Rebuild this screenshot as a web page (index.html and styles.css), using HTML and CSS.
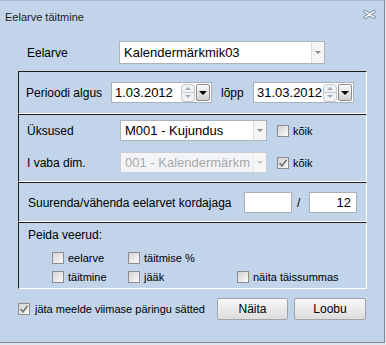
FILE: index.html
```html
<!DOCTYPE html>
<html>
<head>
  <title>Eelarve täitmine</title>
  <link rel="stylesheet" href="styles.css">
</head>
<body>
  <div class="window">
    <div class="titlebar">
      <span class="title">Eelarve täitmine</span>
      <svg class="close-icon" width="13" height="9" viewBox="0 0 13 9">
        <path d="M2 1.5 L11 7.5 M11 1.5 L2 7.5" stroke="#8797aa" stroke-width="3.4" stroke-linecap="round" fill="none"/>
        <path d="M2 1.5 L11 7.5 M11 1.5 L2 7.5" stroke="#ffffff" stroke-width="1.4" stroke-linecap="round" fill="none"/>
      </svg>
    </div>

    <div class="content">
      <div class="row-main">
        <span class="label label-main">Eelarve</span>
        <div class="combo combo-main">
          <span class="combo-value">Kalendermärkmik03</span>
          <span class="combo-trigger"><span class="arrow-small"></span></span>
        </div>
      </div>

      <!-- periood -->
      <div class="group group-period">
        <span class="label label-period">Perioodi algus</span>
        <div class="date-field">
          <span class="date-value">1.03.2012</span>
          <span class="spinner">
            <span class="spin spin-up"><span class="arrow-up"></span></span>
            <span class="spin spin-down"><span class="arrow-down"></span></span>
          </span>
          <span class="drop-btn"><span class="arrow-black"></span></span>
        </div>
        <span class="label label-end">lõpp</span>
        <div class="date-field">
          <span class="date-value">31.03.2012</span>
          <span class="spinner">
            <span class="spin spin-up"><span class="arrow-up"></span></span>
            <span class="spin spin-down"><span class="arrow-down"></span></span>
          </span>
          <span class="drop-btn"><span class="arrow-black"></span></span>
        </div>
      </div>

      <!-- üksused -->
      <div class="group group-units">
        <div class="units-row">
          <span class="label label-units">Üksused</span>
          <div class="combo combo-units">
            <span class="combo-value">M001 - Kujundus</span>
            <span class="combo-trigger"><span class="arrow-small"></span></span>
          </div>
          <span class="check check-units"></span>
          <span class="check-text">kõik</span>
        </div>
        <div class="units-row">
          <span class="label label-units">I vaba dim.</span>
          <div class="combo combo-units combo-disabled">
            <span class="combo-value">001 - Kalendermärkm</span>
            <span class="combo-trigger"><span class="arrow-small"></span></span>
          </div>
          <span class="check check-units">
            <svg width="10" height="10" viewBox="0 0 10 10"><path d="M1.5 5 L4 7.8 L8.6 1.8" stroke="#777" stroke-width="1.7" fill="none"/></svg>
          </span>
          <span class="check-text">kõik</span>
        </div>
      </div>

      <!-- kordaja -->
      <div class="group group-factor">
        <span class="label label-factor">Suurenda/vähenda eelarvet kordajaga</span>
        <span class="num-field"></span>
        <span class="slash">/</span>
        <span class="num-field">12</span>
      </div>

      <!-- peida veerud -->
      <div class="group group-hide">
        <div class="hide-title">Peida veerud:</div>
        <div class="hide-grid">
          <label class="opt"><span class="check"></span>eelarve</label>
          <label class="opt"><span class="check"></span>täitmise %</label>
          <span></span>
          <label class="opt"><span class="check"></span>täitmine</label>
          <label class="opt"><span class="check"></span>jääk</label>
          <label class="opt"><span class="check"></span>näita täissummas</label>
        </div>
      </div>

      <div class="footer">
        <label class="opt opt-remember">
          <span class="check">
            <svg width="10" height="10" viewBox="0 0 10 10"><path d="M1.5 5 L4 7.8 L8.6 1.8" stroke="#777" stroke-width="1.7" fill="none"/></svg>
          </span>
          jäta meelde viimase päringu sätted
        </label>
        <button class="btn">Näita</button>
        <button class="btn btn-cancel">Loobu</button>
      </div>
    </div>
  </div>
</body>
</html>
```

FILE: styles.css
```css
* {
  box-sizing: border-box;
}

body {
  margin: 0;
  background-color: #dfe7f1;
  font-family: "Liberation Sans", Arial, sans-serif;
  font-size: 12px;
  color: #000;
}

.window {
  width: 385px;
  height: 343px;
  background-color: #c1d4ea;
  border-top: 1px solid #a7b7cb;
  border-right: 1px solid #7c8a9a;
  border-bottom: 1px solid #7c8a9a;
}

.titlebar {
  height: 31px;
  display: flex;
  justify-content: space-between;
  align-items: center;
  padding: 0 8px 0 5px;
  font-size: 11px;
  color: #222;
}

.close-icon {
  align-self: flex-start;
  margin-top: 9px;
}

.content {
  padding: 9px 0 0 18px;
}

.label {
  white-space: nowrap;
}

/* combo boxes */
.combo {
  display: flex;
  background-color: #fff;
  border: 1px solid #abb3bd;
}

.combo-value {
  flex: 1;
  padding-left: 4px;
  font-size: 13px;
  line-height: 19px;
  overflow: hidden;
  white-space: nowrap;
}

.combo-trigger {
  width: 13px;
  border-left: 1px solid #dcdcdc;
  background-color: #f5f5f5;
  display: flex;
  align-items: center;
  justify-content: center;
}

.arrow-small {
  border-left: 3px solid transparent;
  border-right: 3px solid transparent;
  border-top: 3px solid #8c8c8c;
}

.combo-disabled {
  background-color: #f3f4f6;
  border-color: #c9ced5;
  color: #a8a8a8;
}

.combo-disabled .combo-trigger {
  background-color: #f7f7f7;
  border-left-color: #e6e6e6;
}

.combo-disabled .arrow-small {
  border-top-color: #c4c4c4;
}

.row-main {
  display: flex;
  align-items: center;
  height: 23px;
}

.label-main {
  width: 92px;
  margin-left: 9px;
}

.combo-main {
  width: 206px;
  height: 23px;
}

.combo-main .combo-value {
  line-height: 21px;
}

/* groups */
.group {
  width: 349px;
  border-top: 1px solid #1e1e1e;
  border-left: 1px solid #1e1e1e;
  border-right: 1px solid #fff;
  border-bottom: 1px solid #fff;
}

.group-period {
  display: flex;
  align-items: center;
  margin-top: 7px;
  padding: 10px 0 10px 7px;
}

.label-period {
  width: 85px;
}

.label-end {
  width: 32px;
  margin-left: 9px;
}

.date-field {
  width: 101px;
  height: 21px;
  display: flex;
  align-items: center;
  background-color: #fff;
  border: 1px solid #a9b0b9;
}

.date-value {
  flex: 1;
  padding-left: 3px;
  font-size: 13px;
  white-space: nowrap;
}

.spinner {
  width: 14px;
  height: 18px;
  display: flex;
  flex-direction: column;
  margin-right: 1px;
}

.spin {
  flex: 1;
  display: flex;
  align-items: center;
  justify-content: center;
  background-color: #f0f2f5;
  border: 1px solid #c3c9d1;
}

.spin-up {
  border-radius: 4px 4px 0 0;
}

.spin-down {
  border-top: none;
  border-radius: 0 0 4px 4px;
}

.arrow-up {
  border-left: 3px solid transparent;
  border-right: 3px solid transparent;
  border-bottom: 3px solid #a3abb5;
}

.arrow-down {
  border-left: 3px solid transparent;
  border-right: 3px solid transparent;
  border-top: 3px solid #a3abb5;
}

.drop-btn {
  width: 14px;
  height: 17px;
  margin-right: 1px;
  display: flex;
  align-items: center;
  justify-content: center;
  border: 1px solid #8f8f8f;
  border-radius: 2px;
  background: linear-gradient(#fafafa, #d0d0d0);
}

.arrow-black {
  border-left: 4px solid transparent;
  border-right: 4px solid transparent;
  border-top: 4px solid #000;
}

.group-units {
  display: flex;
  flex-direction: column;
  gap: 11px;
  padding: 5px 0 8px 8px;
}

.units-row {
  display: flex;
  align-items: center;
  height: 21px;
}

.label-units {
  width: 93px;
}

.combo-units {
  width: 147px;
  height: 21px;
}

/* checkboxes */
.check {
  width: 12px;
  height: 12px;
  flex: none;
  display: flex;
  align-items: center;
  justify-content: center;
  border: 1px solid #8d8d8d;
  background: linear-gradient(135deg, #d3d3d3, #fbfbfb);
}

.check-units {
  margin-left: 10px;
}

.check-text {
  margin-left: 4px;
  font-size: 11px;
}

.group-factor {
  display: flex;
  align-items: center;
  padding: 9px 0 8px 9px;
}

.label-factor {
  width: 216px;
}

.num-field {
  width: 48px;
  height: 21px;
  padding-right: 5px;
  background-color: #fff;
  border: 1px solid #a9b0b9;
  font-size: 13px;
  line-height: 19px;
  text-align: right;
}

.slash {
  width: 17px;
  padding-left: 5px;
}

.group-hide {
  padding: 5px 0 4px 0;
}

.hide-title {
  padding-left: 9px;
  line-height: 14px;
}

.hide-grid {
  display: grid;
  grid-template-columns: 76px 109px auto;
  row-gap: 5px;
  margin-top: 9px;
  padding-left: 33px;
}

.opt {
  display: flex;
  align-items: center;
  height: 14px;
  font-size: 11px;
  white-space: nowrap;
}

.opt .check {
  margin-right: 4px;
}

/* footer */
.footer {
  width: 349px;
  height: 22px;
  display: flex;
  align-items: center;
  margin-top: 9px;
  padding-right: 1px;
}

.opt-remember {
  flex: 1;
}

.opt-remember .check {
  margin-right: 5px;
}

.btn {
  width: 71px;
  height: 22px;
  padding: 0;
  font-family: "Liberation Sans", Arial, sans-serif;
  font-size: 12px;
  color: #000;
  border: 1px solid #9ea4ab;
  border-radius: 2px;
  background: linear-gradient(#f8f8f8, #dcdcdc);
}

.btn-cancel {
  width: 72px;
  margin-left: 6px;
}
```
